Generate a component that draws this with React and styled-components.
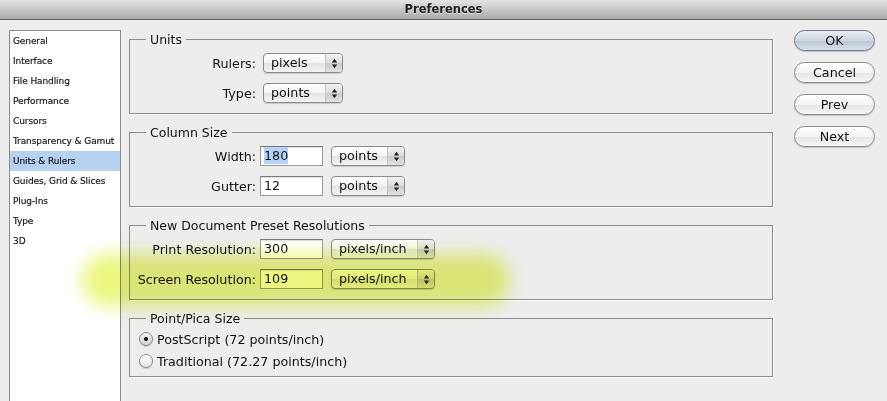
import React from 'react';
import styled, { createGlobalStyle } from 'styled-components';

const GlobalStyle = createGlobalStyle`
  html, body {
    margin: 0;
    padding: 0;
    background: #ededed;
  }
  * { box-sizing: border-box; }
`;

const FONT = `"DejaVu Sans", "Liberation Sans", sans-serif`;

const sections = [
  'General',
  'Interface',
  'File Handling',
  'Performance',
  'Cursors',
  'Transparency & Gamut',
  'Units & Rulers',
  'Guides, Grid & Slices',
  'Plug-Ins',
  'Type',
  '3D',
];

const App = () => {
  return (
    <Window>
      <GlobalStyle />
      <TitleBar>Preferences</TitleBar>
      <Body>
        <Sidebar>
          {sections.map((s) => (
            <SideItem key={s} $active={s === 'Units & Rulers'}>{s}</SideItem>
          ))}
        </Sidebar>

        <Main>
          <Group>
            <Legend>Units</Legend>
            <Rows>
              <Row>
                <Label>Rulers:</Label>
                <Popup $w={80} $ml={7}><span>pixels</span><Arrows /></Popup>
              </Row>
              <Row>
                <Label>Type:</Label>
                <Popup $w={80} $ml={7}><span>points</span><Arrows /></Popup>
              </Row>
            </Rows>
          </Group>

          <Group>
            <Legend>Column Size</Legend>
            <Rows>
              <Row>
                <Label>Width:</Label>
                <Field><Selected>180</Selected></Field>
                <Popup $w={74}><span>points</span><Arrows /></Popup>
              </Row>
              <Row>
                <Label>Gutter:</Label>
                <Field>12</Field>
                <Popup $w={74}><span>points</span><Arrows /></Popup>
              </Row>
            </Rows>
          </Group>

          <Group>
            <Legend>New Document Preset Resolutions</Legend>
            <Rows>
              <Row>
                <Label>Print Resolution:</Label>
                <Field>300</Field>
                <Popup $w={104}><span>pixels/inch</span><Arrows /></Popup>
              </Row>
              <Row>
                <Label>Screen Resolution:</Label>
                <Field>109</Field>
                <Popup $w={104}><span>pixels/inch</span><Arrows /></Popup>
              </Row>
            </Rows>
          </Group>

          <Group $pb={6}>
            <Legend>Point/Pica Size</Legend>
            <Rows $gap={4} $mt={3}>
              <RadioRow>
                <Radio $checked />
                PostScript (72 points/inch)
              </RadioRow>
              <RadioRow>
                <Radio />
                Traditional (72.27 points/inch)
              </RadioRow>
            </Rows>
          </Group>
        </Main>

        <Buttons>
          <PillButton $primary>OK</PillButton>
          <PillButton>Cancel</PillButton>
          <PillButton>Prev</PillButton>
          <PillButton>Next</PillButton>
        </Buttons>
      </Body>
      <Highlighter />
    </Window>
  );
};

const Arrows = () => (
  <ArrowBox>
    <svg width="7" height="11" viewBox="0 0 7 11">
      <path d="M3.5 0.8 L6.2 4.4 L0.8 4.4 Z" fill="#222" />
      <path d="M3.5 10.2 L6.2 6.6 L0.8 6.6 Z" fill="#222" />
    </svg>
  </ArrowBox>
);

export default App;

const Window = styled.div`
  position: relative;
  width: 887px;
  height: 401px;
  overflow: hidden;
  background: #ededed;
  font-family: ${FONT};
  color: #111;
`;

const TitleBar = styled.div`
  height: 20px;
  border-bottom: 1px solid #5e5e5e;
  background: linear-gradient(#e4e4e4, #ababab);
  text-align: center;
  font-size: 11.5px;
  font-weight: bold;
  line-height: 19px;
  color: #222;
  text-shadow: 0 1px 0 rgba(255, 255, 255, 0.5);
`;

const Body = styled.div`
  display: flex;
  align-items: flex-start;
  padding-left: 9px;
`;

const Sidebar = styled.div`
  width: 112px;
  height: 400px;
  margin-top: 10px;
  background: #fff;
  border: 1px solid #8a8a8a;
`;

const SideItem = styled.div`
  height: 20px;
  line-height: 20px;
  padding-left: 3px;
  font-size: 9px;
  letter-spacing: -0.1px;
  color: #111;
  -webkit-text-stroke: 0.15px #111;
  white-space: nowrap;
  background: ${(p) => (p.$active ? '#b7d1f1' : 'transparent')};
`;

const Main = styled.div`
  width: 644px;
  margin-left: 8px;
  margin-top: 19px;
  display: flex;
  flex-direction: column;
  gap: 18px;
`;

const Group = styled.div`
  border: 1px solid #8c8c8c;
  padding-bottom: ${(p) => p.$pb ?? 10}px;
  box-shadow: 1px 1px 0 #fafafa;
`;

const Legend = styled.div`
  display: table;
  margin: -8px 0 0 16px;
  padding: 0 4px;
  height: 16px;
  line-height: 16px;
  background: #ededed;
  font-size: 12.5px;
`;

const Rows = styled.div`
  display: flex;
  flex-direction: column;
  gap: ${(p) => p.$gap ?? 10}px;
  margin-top: ${(p) => p.$mt ?? 5}px;
`;

const Row = styled.div`
  display: flex;
  align-items: center;
  height: 20px;
`;

const Label = styled.div`
  width: 126px;
  text-align: right;
  font-size: 12.7px;
  white-space: nowrap;
`;

const Field = styled.div`
  width: 63px;
  height: 20px;
  margin-left: 4px;
  padding-left: 3px;
  background: #fff;
  border: 1px solid #9a9a9a;
  border-top-color: #7a7a7a;
  box-shadow: inset 0 1px 1px rgba(0, 0, 0, 0.12);
  font-size: 12.7px;
  line-height: 18px;
`;

const Selected = styled.span`
  background: #b5d3fb;
  padding: 1px 0;
`;

const Popup = styled.div`
  display: flex;
  align-items: stretch;
  justify-content: space-between;
  width: ${(p) => p.$w}px;
  height: 20px;
  margin-left: ${(p) => p.$ml ?? 8}px;
  border: 1px solid #8b8b8b;
  border-radius: 4px;
  background: linear-gradient(#ffffff, #f3f3f3 50%, #e4e4e4 51%, #f4f4f4);
  box-shadow: 0 1px 1px rgba(0, 0, 0, 0.15);
  font-size: 12.7px;
  overflow: hidden;

  span {
    padding-left: 7px;
    line-height: 18px;
    white-space: nowrap;
  }
`;

const ArrowBox = styled.div`
  width: 17px;
  display: flex;
  align-items: center;
  justify-content: center;
  border-left: 1px solid #c4c4c4;
  background: linear-gradient(#f2f2f2, #dcdcdc 50%, #cacaca 51%, #e2e2e2);
`;

const RadioRow = styled.div`
  display: flex;
  align-items: center;
  height: 18px;
  padding-left: 9px;
  font-size: 12.7px;
  white-space: nowrap;
`;

const Radio = styled.span`
  width: 14px;
  height: 14px;
  margin-right: 4px;
  border-radius: 50%;
  border: 1px solid #8a8a8a;
  background: ${(p) =>
    p.$checked
      ? 'radial-gradient(circle, #1a1a1a 0, #1a1a1a 1.6px, transparent 2.4px), linear-gradient(#f6f6f6, #d2d2d2)'
      : 'linear-gradient(#ffffff, #e8e8e8)'};
  box-shadow: 0 1px 1px rgba(0, 0, 0, 0.15);
`;

const Buttons = styled.div`
  display: flex;
  flex-direction: column;
  gap: 11px;
  margin-top: 10px;
  margin-left: 21px;
`;

const PillButton = styled.div`
  width: 81px;
  height: 21px;
  border-radius: 11px;
  border: 1px solid ${(p) => (p.$primary ? '#6f7b88' : '#8a8a8a')};
  background: ${(p) =>
    p.$primary
      ? 'linear-gradient(#e9eef3, #ccd6e0 50%, #b9c7d4 51%, #d6e0ea)'
      : 'linear-gradient(#ffffff, #f4f4f4 50%, #e6e6e6 51%, #f6f6f6)'};
  box-shadow: 0 1px 1px rgba(0, 0, 0, 0.18);
  text-align: center;
  font-size: 12.7px;
  line-height: 19px;
  color: #111;
`;

const Highlighter = styled.div`
  position: absolute;
  left: 82px;
  top: 254px;
  width: 428px;
  height: 52px;
  border-radius: 26px;
  background: #eaf570;
  mix-blend-mode: multiply;
  filter: blur(9px);
  opacity: 0.9;
  pointer-events: none;
`;
